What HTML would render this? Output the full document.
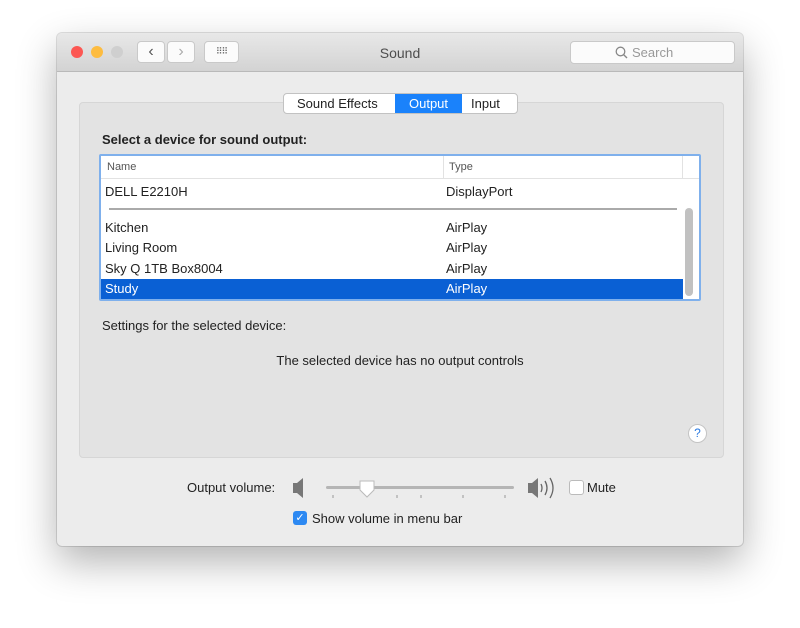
<!DOCTYPE html><html><head><style>
body{margin:0;width:800px;height:628px;background:#fff;font-family:"Liberation Sans",sans-serif;font-size:13px;color:#222;position:relative;overflow:hidden}
.a{position:absolute}
.win{left:57px;top:33px;width:686px;height:513px;background:#ececec;border-radius:5px;box-shadow:0 16px 40px rgba(0,0,0,.3),0 0 0 1px rgba(0,0,0,.12);overflow:hidden}
.tb{left:0;top:0;width:686px;height:38px;background:linear-gradient(#e8e8e8,#d3d3d3);border-bottom:1px solid #b9b9b9}
.dot{width:12px;height:12px;border-radius:50%;top:13px}
.btn{background:#fbfbfb;border:1px solid #c9c9c9;border-radius:4px;height:20px;top:8px}
.row{position:absolute;left:0;width:582px;height:20px;line-height:20px}
.row span{position:absolute}
</style></head><body>
<div class="a win">
 <div class="a tb">
  <div class="a dot" style="left:14px;background:#fc5753;border:0"></div>
  <div class="a dot" style="left:34px;background:#fdbc40"></div>
  <div class="a dot" style="left:54px;background:#cfcfcf"></div>
  <div class="a btn" style="left:80px;width:26px;text-align:center;color:#555;font-size:16px;line-height:19px">&#8249;</div>
  <div class="a btn" style="left:110px;width:26px;text-align:center;color:#aaa;font-size:16px;line-height:19px">&#8250;</div>
  <div class="a btn" style="left:147px;width:33px;text-align:center;color:#666;font-size:9px;line-height:19px;letter-spacing:-1px">⠿⠿</div>
  <div class="a" style="left:0;width:686px;top:12px;text-align:center;color:#4d4d4d;font-size:14px">Sound</div>
  <div class="a btn" style="left:513px;top:8px;width:163px;height:21px;color:#999;font-size:13px;line-height:21px"><svg style="position:absolute;left:44px;top:4px" width="13" height="13"><circle cx="5.5" cy="5.5" r="4.3" fill="none" stroke="#888" stroke-width="1.3"/><path d="M8.6 8.6L12 12" stroke="#888" stroke-width="1.4"/></svg><span style="position:absolute;left:61px">Search</span></div>
 </div>
 <div class="a" style="left:22px;top:69px;width:643px;height:354px;background:#e3e3e3;border:1px solid #d6d6d6;border-radius:4px"></div>
 <div class="a" style="left:226px;top:60px;width:233px;height:19px;background:#fff;border:1px solid #c2c2c2;border-radius:4px;line-height:19px;overflow:hidden">
  <span class="a" style="left:13px">Sound Effects</span>
  <span class="a" style="left:111px;width:67px;height:19px;background:#1a82fb;color:#fff;text-align:center">Output</span>
  <span class="a" style="left:187px">Input</span>
 </div>
 <div class="a" style="left:45px;top:99px;font-weight:bold">Select a device for sound output:</div>
 <div class="a" style="left:42px;top:121px;width:598px;height:143px;border:2px solid #7fb0ec;border-radius:2px;background:#fff;overflow:hidden">
  <div class="a" style="left:0;top:0;width:598px;height:22px;border-bottom:1px solid #e2e2e2;font-size:11px;color:#555;line-height:22px"><span class="a" style="left:6px">Name</span><span class="a" style="left:342px;top:0;height:22px;border-left:1px solid #e2e2e2;padding-left:5px">Type</span><span class="a" style="left:581px;height:22px;border-left:1px solid #e2e2e2"></span></div>
  <div class="row" style="top:26px"><span style="left:4px">DELL E2210H</span><span style="left:345px">DisplayPort</span></div>
  <div class="a" style="left:8px;top:52px;width:568px;height:2px;background:#aaa"></div>
  <div class="row" style="top:62px"><span style="left:4px">Kitchen</span><span style="left:345px">AirPlay</span></div>
  <div class="row" style="top:82px"><span style="left:4px">Living Room</span><span style="left:345px">AirPlay</span></div>
  <div class="row" style="top:103px"><span style="left:4px">Sky Q 1TB Box8004</span><span style="left:345px">AirPlay</span></div>
  <div class="row" style="top:123px;background:#0a60d4;color:#fff"><span style="left:4px">Study</span><span style="left:345px">AirPlay</span></div>
  <div class="a" style="left:584px;top:52px;width:8px;height:88px;background:#c1c1c1;border-radius:4px"></div>
 </div>
 <div class="a" style="left:45px;top:285px">Settings for the selected device:</div>
 <div class="a" style="left:0;width:686px;top:320px;text-align:center">The selected device has no output controls</div>
 <div class="a" style="left:631px;top:391px;width:17px;height:17px;border-radius:50%;background:#fff;border:1px solid #c4c4c4;text-align:center;line-height:17px;color:#2a7ae2;font-size:12px">?</div>
 <div class="a" style="left:130px;top:447px">Output volume:</div>
 <svg class="a" style="left:234px;top:443px" width="270" height="26">
  <path d="M2 7h4l6-5v20l-6-5H2z" fill="#777"/>
  <rect x="35" y="10" width="188" height="3" rx="1.5" fill="#b5b5b5"/>
  <g stroke="#999"><path d="M42 19v3M106 19v3M130 19v3M172 19v3M214 19v3"/></g>
  <path d="M69 5h14v9l-7 7-7-7z" fill="#fff" stroke="#bbb"/>
  <path d="M237 7h4l6-5v20l-6-5h-4z" fill="#777"/>
  <g fill="none" stroke="#666" stroke-width="1.3"><path d="M250 8q2 4 0 8M254 5q4 7 0 14M259 2q6 10 0 20"/></g>
 </svg>
 <div class="a" style="left:512px;top:447px;width:13px;height:13px;border:1px solid #bbb;border-radius:3px;background:#fff"></div>
 <div class="a" style="left:530px;top:447px">Mute</div>
 <div class="a" style="left:236px;top:478px;width:14px;height:14px;border-radius:3px;background:#2d89f2;color:#fff;font-size:11px;text-align:center;line-height:14px">✓</div>
 <div class="a" style="left:255px;top:478px">Show volume in menu bar</div>
</div>
</body></html>
